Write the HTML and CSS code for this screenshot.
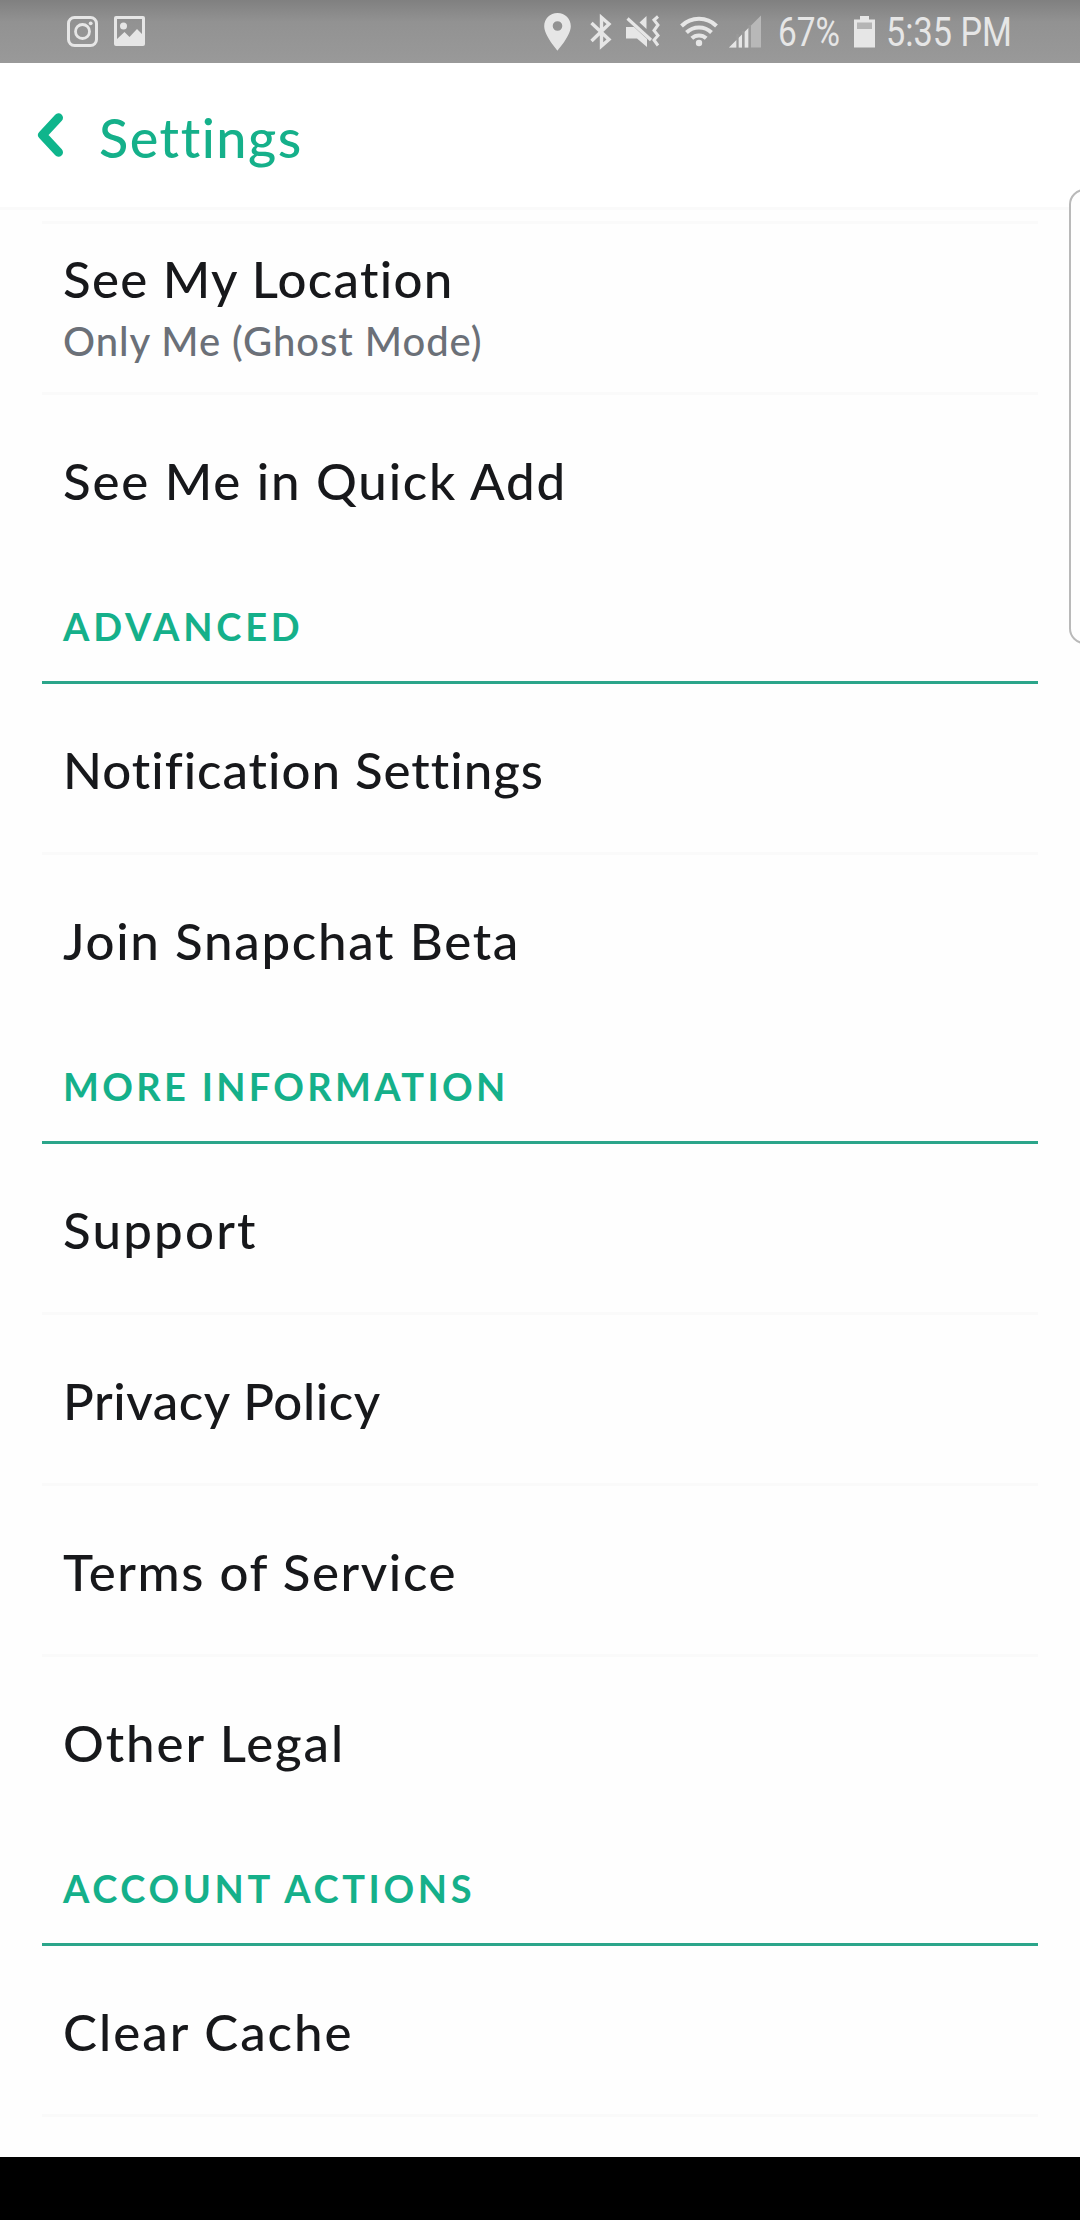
FILE: index.html
```
<!DOCTYPE html>
<html lang="en">
<head>
  <meta charset="UTF-8">
  <meta name="viewport" content="width=device-width, initial-scale=1.0">
  <title>Settings</title>
  <link rel="stylesheet" href="styles.css">
</head>
<body>

<div class="status-bar">
  <svg class="status-left" width="80" height="63" viewBox="66 0 80 63">
    <rect x="68.5" y="17.5" width="28" height="28" rx="6" fill="none" stroke="#e6e6e6" stroke-width="3"/>
    <circle cx="82.5" cy="31.5" r="7" fill="none" stroke="#e6e6e6" stroke-width="2.8"/>
    <circle cx="90.7" cy="23.3" r="1.9" fill="#e6e6e6"/>
    <path fill="#e6e6e6" fill-rule="evenodd" d="M116 16h27a2 2 0 0 1 2 2v26a2 2 0 0 1-2 2h-27a2 2 0 0 1-2-2V18a2 2 0 0 1 2-2zM117 19v20l7.500-7 5 5 7.500-8 5 5V19z"/>
    <circle cx="123.500" cy="26" r="3.500" fill="#e6e6e6"/>
  </svg>
  <svg class="status-right" width="222" height="63" viewBox="542 0 222 63">
    <path fill="#e6e6e6" fill-rule="evenodd" d="M557.500 13c7.500 0 13.300 5.700 13.300 13.200 0 9.500-13.300 24.300-13.300 24.300S544.200 35.700 544.200 26.200C544.200 18.700 550 13 557.500 13zm0 8.200a4.800 4.800 0 1 0 0 9.600 4.800 4.800 0 0 0 0-9.600z"/>
    <path fill="none" stroke="#e6e6e6" stroke-width="3.400" d="M591.500 23L609 39.500 601.500 46V17.500L609 24 591.500 41"/>
    <path fill="#e6e6e6" d="M626 27h8l13 12v8l-10-8.500h-11zM639.500 22.500l7-6.500v13z"/>
    <path stroke="#e6e6e6" stroke-width="3.200" d="M627.500 18.500L651 40"/>
    <path fill="none" stroke="#e6e6e6" stroke-width="3" d="M658 16.500l-4 3.500 4 5-4 5.500 4 5-4 4.500 4 5.500"/>
    <path fill="none" stroke="#e6e6e6" stroke-width="4" d="M681.500 26a25 25 0 0 1 35 0M686.500 32.500a18 18 0 0 1 25 0M691.800 38.300a10.500 10.500 0 0 1 14.400 0"/>
    <circle cx="699" cy="43" r="3.200" fill="#e6e6e6"/>
    <path fill="#b8b8b8" d="M729 47.500L761 15.500v32z"/>
    <path fill="#e6e6e6" d="M729 47.500l7.500-7.500v7.500zM738.500 47.500V38l3.500-3.500v13zM744.500 47.500V32l4-4v19.500z"/>
    <path fill="#999" d="M736.500 34h2v14h-2zM742 31h2.500v17H742zM748.500 25h2.500v23h-2.500z"/>
  </svg>
  <span class="status-text percent">67%</span>
  <svg class="battery" width="22" height="63" viewBox="852 0 22 63">
    <path fill="#e6e6e6" d="M858 16h9v3.500h6v28h-21v-28h6z"/>
    <path fill="#b5b5b5" d="M855 22.500h15v6.500h-15z"/>
  </svg>
  <span class="status-text time">5:35 PM</span>
</div>

<header>
  <svg class="back" width="28" height="48" viewBox="37 112 28 48">
    <path fill="none" stroke="#0fb58c" stroke-width="9" stroke-linecap="round" stroke-linejoin="round" d="M58.500 118.700L42.500 136l16 17.300"/>
  </svg>
  <h1>Settings</h1>
</header>

<main>
  <div class="row">
    <p class="location">See My Location</p>
    <p class="sub">Only Me (Ghost Mode)</p>
  </div>
  <div class="row last"><p class="quick-add">See Me in Quick Add</p></div>

  <h2 class="advanced">ADVANCED</h2>
  <div class="row"><p class="notifications">Notification Settings</p></div>
  <div class="row last"><p class="beta">Join Snapchat Beta</p></div>

  <h2 class="more-info">MORE INFORMATION</h2>
  <div class="row"><p class="support">Support</p></div>
  <div class="row"><p class="privacy">Privacy Policy</p></div>
  <div class="row"><p class="terms">Terms of Service</p></div>
  <div class="row last"><p class="legal">Other Legal</p></div>

  <h2 class="account">ACCOUNT ACTIONS</h2>
  <div class="row"><p class="cache">Clear Cache</p></div>
</main>

<div class="edge-handle"></div>
<div class="nav-bar"></div>

</body>
</html>
```

FILE: styles.css
```
* {
  margin: 0;
  padding: 0;
  box-sizing: border-box;
}

body {
  position: relative;
  width: 1080px;
  height: 2220px;
  background: #fefefe;
  color: #17181b;
  font-family: Lato, sans-serif;
  display: flex;
  flex-direction: column;
  overflow: hidden;
}

.status-bar {
  height: 63px;
  background: linear-gradient(180deg, #808080 0%, #929292 35%, #999 100%);
  display: flex;
  flex-shrink: 0;
  padding-left: 66px;
}

.status-right {
  margin-left: 396px;
}

.status-text {
  font-family: Roboto, sans-serif;
  font-size: 40px;
  line-height: 66px;
  color: #e6e6e6;
  white-space: nowrap;
  transform-origin: left;
}

.percent {
  width: 74px;
  margin-left: 14px;
  transform: scaleX(0.835);
}

.battery {
  margin-left: 2px;
}

.time {
  margin-left: 10px;
  transform: scaleX(0.855);
}

header {
  height: 147px;
  flex-shrink: 0;
  background: #fff;
  border-bottom: 3px solid #fafafa;
  display: flex;
  align-items: center;
  padding-left: 37px;
}

h1 {
  margin-left: 34px;
  padding-top: 5px;
  color: #15b08a;
  font-size: 54px;
  font-weight: 500;
  line-height: 66px;
  letter-spacing: 1.5px;
}

main {
  height: 1947px;
  flex-shrink: 0;
  margin: 0 42px;
  padding-top: 11px;
}

main::before {
  content: "";
  display: block;
  height: 3px;
  background: #fafafa;
}

.row {
  height: 171px;
  padding: 3px 21px 0;
  border-bottom: 3px solid #fafafa;
  display: flex;
  flex-direction: column;
  justify-content: center;
}

.row.last {
  border-color: transparent;
}

.row p {
  font-size: 51px;
  font-weight: 500;
  line-height: 62px;
  white-space: nowrap;
}

.row .sub {
  color: #6b7078;
  font-size: 40px;
  line-height: 62px;
  letter-spacing: 0.95px;
}

.location { letter-spacing: 1.3px; }
.quick-add { letter-spacing: 1.8px; }
.notifications { letter-spacing: 1px; }
.beta { letter-spacing: 1.7px; }
.support { letter-spacing: 2.2px; }
.privacy { letter-spacing: 0.6px; }
.terms { letter-spacing: 1.6px; }
.legal { letter-spacing: 1.9px; }
.cache { letter-spacing: 2px; }

h2 {
  height: 118px;
  padding: 37px 21px 0;
  border-bottom: 3px solid #2ba58a;
  color: #15b08a;
  font-size: 38px;
  font-weight: 700;
  line-height: 46px;
}

.advanced { letter-spacing: 3.8px; }
.more-info { letter-spacing: 3.3px; }
.account { letter-spacing: 3.6px; }

/* side panel grip hanging off the right edge */
.edge-handle {
  position: absolute;
  top: 189px;
  right: -20px;
  width: 31px;
  height: 455px;
  border: 2px solid #b9b9b9;
  border-radius: 16px;
  background: #fefefe;
}

.nav-bar {
  height: 63px;
  flex-shrink: 0;
  background: #000;
}
```
